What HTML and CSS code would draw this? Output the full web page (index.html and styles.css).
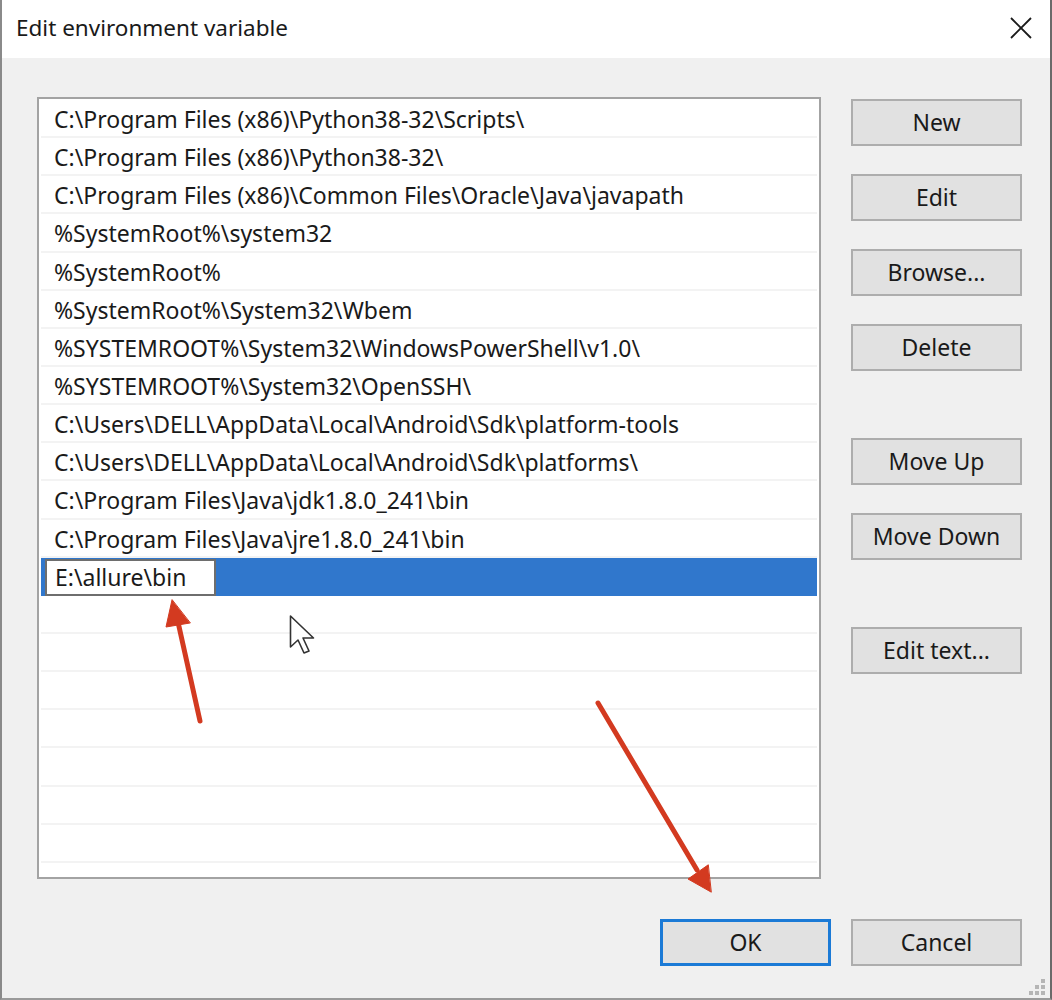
FILE: index.html
```html
<!DOCTYPE html>
<html lang="en">

<head>
    <meta charset="UTF-8">
    <title>Edit environment variable</title>
    <link rel="stylesheet" href="styles.css">
</head>

<body>
    <div class="window">
        <div class="titlebar">
            <span class="title">Edit environment variable</span>
            <svg class="close" width="22" height="22" viewBox="0 0 22 22">
                <path d="M1 1 L21 21 M21 1 L1 21" stroke="#1a1a1a" stroke-width="1.8" fill="none" />
            </svg>
        </div>

        <div class="content">
            <div class="main">
                <div class="list">
                    <div class="row">C:\Program Files (x86)\Python38-32\Scripts\</div>
                    <div class="row">C:\Program Files (x86)\Python38-32\</div>
                    <div class="row">C:\Program Files (x86)\Common Files\Oracle\Java\javapath</div>
                    <div class="row">%SystemRoot%\system32</div>
                    <div class="row">%SystemRoot%</div>
                    <div class="row">%SystemRoot%\System32\Wbem</div>
                    <div class="row">%SYSTEMROOT%\System32\WindowsPowerShell\v1.0\</div>
                    <div class="row">%SYSTEMROOT%\System32\OpenSSH\</div>
                    <div class="row">C:\Users\DELL\AppData\Local\Android\Sdk\platform-tools</div>
                    <div class="row">C:\Users\DELL\AppData\Local\Android\Sdk\platforms\</div>
                    <div class="row">C:\Program Files\Java\jdk1.8.0_241\bin</div>
                    <div class="row">C:\Program Files\Java\jre1.8.0_241\bin</div>
                    <div class="row selected"><span class="editor">E:\allure\bin</span></div>
                    <div class="row"></div>
                    <div class="row"></div>
                    <div class="row"></div>
                    <div class="row"></div>
                    <div class="row"></div>
                    <div class="row"></div>
                    <div class="row"></div>
                    <div class="row last"></div>
                </div>

                <div class="side">
                    <button class="btn">New</button>
                    <button class="btn">Edit</button>
                    <button class="btn">Browse...</button>
                    <button class="btn">Delete</button>
                    <button class="btn group">Move Up</button>
                    <button class="btn">Move Down</button>
                    <button class="btn group">Edit text...</button>
                </div>
            </div>

            <div class="footer">
                <button class="btn default">OK</button>
                <button class="btn">Cancel</button>
            </div>
        </div>

        <!-- annotations drawn over the dialog -->
        <svg class="overlay" width="1052" height="1000" viewBox="0 0 1052 1000">
            <g stroke="#d33a20" stroke-width="5" fill="#d33a20" stroke-linecap="round">
                <line x1="200" y1="721" x2="178" y2="622" />
                <polygon points="172,600 166,627 190,623" stroke-width="1" />
                <line x1="598" y1="703" x2="697" y2="870" />
                <polygon points="711,892 688,879 708,865" stroke-width="1" />
            </g>
            <path d="M290.5 616 L290.5 647 L298 640 L304 653 L309 651 L303 638 L313.5 638 Z"
                fill="#fff" stroke="#333" stroke-width="1.6" stroke-linejoin="round" />
            <g fill="#b5b5b5">
                <rect x="1041" y="979" width="4" height="4" />
                <rect x="1035" y="985" width="4" height="4" />
                <rect x="1041" y="985" width="4" height="4" />
                <rect x="1029" y="991" width="4" height="4" />
                <rect x="1035" y="991" width="4" height="4" />
                <rect x="1041" y="991" width="4" height="4" />
            </g>
        </svg>
    </div>
</body>

</html>
```

FILE: styles.css
```css
* {
    margin: 0;
    padding: 0;
    box-sizing: border-box;
}

body {
    font-family: 'Noto Sans', 'Open Sans', sans-serif;
    font-size: 23px;
    color: #1a1a1a;
    background: #f0f0f0;
}

.window {
    position: relative;
    width: 1052px;
    height: 1000px;
    background-color: #f0f0f0;
    border-left: 2px solid #8a8a8a;
    border-right: 2px solid #6a6a6a;
    border-bottom: 2px solid #9a9a9a;
    display: flex;
    flex-direction: column;
}

.titlebar {
    height: 58px;
    background-color: #ffffff;
    display: flex;
    align-items: center;
    justify-content: space-between;
    padding: 0 18px 3px 14px;
}

.title {
    font-size: 22.5px;
    color: #1a1a1a;
}

.close {
    display: block;
    margin-top: 1px;
}

.content {
    flex: 1;
    padding: 39px 28px 0 35px;
    display: flex;
    flex-direction: column;
}

.main {
    display: flex;
    gap: 30px;
}

.list {
    width: 784px;
    height: 782px;
    background-color: #ffffff;
    border: 2px solid #a3a3a3;
    padding: 1px 2px 0 2px;
    overflow: hidden;
}

.row {
    height: 38.15px;
    line-height: 38px;
    padding-left: 13px;
    border-bottom: 2px solid #f3f3f3;
    white-space: nowrap;
}

.row.selected {
    background-color: #3077cc;
    border-bottom-color: #3077cc;
    padding-left: 4px;
    padding-top: 1px;
}

.editor {
    display: inline-block;
    width: 171px;
    height: 37px;
    line-height: 33px;
    background-color: #ffffff;
    border: 2px solid #6e6e6e;
    padding-left: 8px;
    vertical-align: top;
}

.side {
    display: flex;
    flex-direction: column;
    gap: 28px;
    padding-top: 2px;
}

.btn {
    width: 171px;
    height: 47px;
    font-family: inherit;
    font-size: 23px;
    color: #1a1a1a;
    background-color: #e1e1e1;
    border: 2px solid #adadad;
    padding-bottom: 2px;
}

.side .group {
    margin-top: 39px;
}

.footer {
    display: flex;
    justify-content: flex-end;
    gap: 20px;
    margin-top: 40px;
}

.btn.default {
    border: 3px solid #1b7ad6;
}

.overlay {
    position: absolute;
    top: 0;
    left: -2px;
    pointer-events: none;
}
```
